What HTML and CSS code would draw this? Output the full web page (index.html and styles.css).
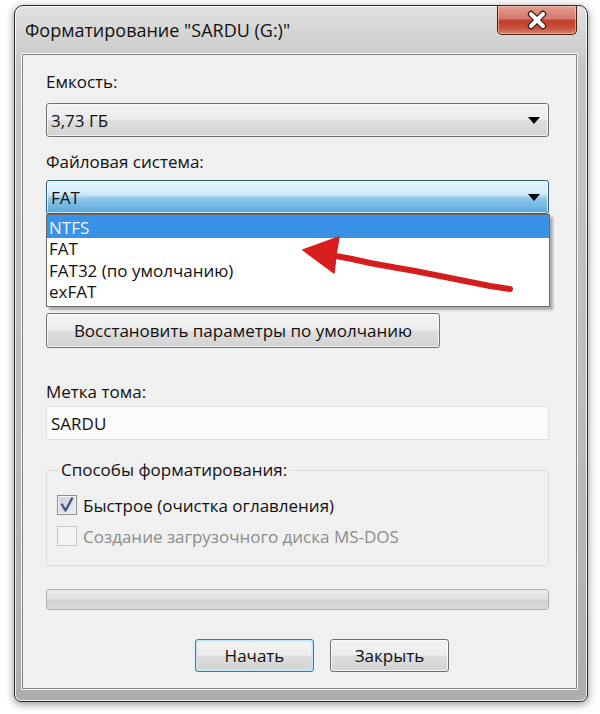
FILE: index.html
```html
<!DOCTYPE html>
<html lang="ru">
<head>
<meta charset="utf-8">
<title>Форматирование</title>
<link rel="stylesheet" href="styles.css">
</head>
<body>
<div class="window">
  <div class="titlebar">
    <span class="title">Форматирование "SARDU (G:)"</span>
    <div class="close">
      <svg width="26" height="20" viewBox="0 0 26 20">
        <path d="M7 4 L19 16 M19 4 L7 16" stroke="#3a1a14" stroke-width="6.5" stroke-linecap="round"/>
        <path d="M7 4 L19 16 M19 4 L7 16" stroke="#ffffff" stroke-width="4" stroke-linecap="round"/>
      </svg>
    </div>
  </div>
  <div class="panel">
    <div class="label">Емкость:</div>
    <div class="combo"><span>3,73 ГБ</span><span class="caret"></span></div>
    <div class="label label-fs">Файловая система:</div>
    <div class="combo-wrap">
      <div class="combo combo-hot"><span>FAT</span><span class="caret"></span></div>
      <ul class="dropdown">
        <li class="selected">NTFS</li>
        <li>FAT</li>
        <li>FAT32 (по умолчанию)</li>
        <li>exFAT</li>
      </ul>
    </div>
    <div class="btn restore">Восстановить параметры по умолчанию</div>
    <div class="label label-vol">Метка тома:</div>
    <div class="textbox">SARDU</div>
    <fieldset class="group">
      <legend>Способы форматирования:</legend>
      <div class="check">
        <span class="box box-checked">
          <svg width="18" height="18" viewBox="0 0 18 18">
            <path d="M4 8.5 L7.5 14.5 L14 2.5" fill="none" stroke="#46567a" stroke-width="2.4" stroke-linejoin="round" stroke-linecap="round"/>
          </svg>
        </span>
        <span>Быстрое (очистка оглавления)</span>
      </div>
      <div class="check check-disabled">
        <span class="box"></span>
        <span>Создание загрузочного диска MS-DOS</span>
      </div>
    </fieldset>
    <div class="progress"></div>
    <div class="buttons">
      <div class="btn btn-default">Начать</div>
      <div class="btn">Закрыть</div>
    </div>
  </div>
  <svg class="red-arrow" width="574" height="697" viewBox="14 5 574 697">
    <path d="M336 256 L352 259 L370 263 L392 267 L415 271 L440 276 L465 281 L490 286 L510 289" fill="none" stroke="#d61d1d" stroke-width="6" stroke-linecap="round" stroke-linejoin="round"/>
    <path d="M303 250 L339 237 L336 255 L334 273 Z" fill="#d91e1e" stroke="#d91e1e" stroke-width="1.5" stroke-linejoin="round"/>
  </svg>
</div>
</body>
</html>
```

FILE: styles.css
```css
html, body {
  margin: 0;
  padding: 0;
  background: #ffffff;
}

body {
  font-family: "Open Sans", "Noto Sans", "DejaVu Sans", sans-serif;
  font-size: 17px;
  color: #111;
  width: 600px;
  height: 714px;
  overflow: hidden;
}

.window {
  position: relative;
  margin: 5px 0 0 14px;
  width: 574px;
  height: 697px;
  box-sizing: border-box;
  border: 1px solid #2a2a2a;
  border-radius: 9px 9px 7px 7px;
  padding: 0 10px 12px 7px;
  display: flex;
  flex-direction: column;
  background: linear-gradient(to bottom, #e2e2e2 0px, #d4d4d4 30px, #c6c6c6 60px, #bcbcbc 400px, #adadad 100%);
  box-shadow: inset 0 0 0 1px rgba(255,255,255,0.8), 0 2px 9px rgba(0,0,0,0.45);
}

.titlebar {
  height: 48px;
  display: flex;
  justify-content: space-between;
  align-items: flex-start;
  flex: none;
}

.title {
  padding: 12px 0 0 3px;
  font-size: 18px;
  line-height: 24px;
  color: #111;
}

.close {
  width: 80px;
  height: 29px;
  box-sizing: border-box;
  border: 1px solid #4a1f18;
  border-top: none;
  border-radius: 0 0 5px 5px;
  background: linear-gradient(to bottom, #e3a093 0%, #d6786a 45%, #c0412c 52%, #c5503a 78%, #d98670 100%);
  box-shadow: inset 0 0 0 1px rgba(255,220,210,0.5);
  display: flex;
  align-items: center;
  justify-content: center;
}

.panel {
  flex: 1;
  background: #f0f0f0;
  border: 1px solid #858585;
  box-shadow: 0 0 0 1px rgba(255,255,255,0.85);
  padding: 17px 27px 0 23px;
  display: flex;
  flex-direction: column;
}

.label {
  line-height: 20px;
  height: 20px;
  margin-bottom: 11px;
}

.label-fs {
  margin-top: 15px;
  margin-bottom: 8px;
}

.label-vol {
  margin-top: 34px;
  margin-bottom: 4px;
}

.combo {
  height: 34px;
  box-sizing: border-box;
  border: 1px solid #707070;
  border-radius: 3px;
  background: linear-gradient(to bottom, #f4f4f4 0%, #ececec 48%, #dedede 52%, #d3d3d3 100%);
  box-shadow: inset 0 0 0 1px rgba(255,255,255,0.7);
  display: flex;
  align-items: center;
  justify-content: space-between;
  padding: 0 8px 0 4px;
}

.caret {
  width: 0;
  height: 0;
  border-left: 6px solid transparent;
  border-right: 6px solid transparent;
  border-top: 7px solid #000;
}

.combo-wrap {
  position: relative;
  margin-bottom: 99px;
}

.combo-hot {
  border-color: #2d5f86;
  background: linear-gradient(to bottom, #e8f5fc 0%, #cfe9f8 42%, #8ec8eb 55%, #5aa6da 100%);
}

.dropdown {
  position: absolute;
  left: 0;
  top: 100%;
  width: 504px;
  margin: 0;
  padding: 0 0 3px 0;
  list-style: none;
  background: #ffffff;
  border: 1px solid #6a6a6a;
  box-sizing: border-box;
  box-shadow: 3px 3px 2px rgba(0,0,0,0.28);
}

.dropdown li {
  height: 21.5px;
  line-height: 21px;
  padding-left: 2px;
}

.dropdown li.selected {
  background: #3a92e6;
  color: #eaf3ff;
  height: 23px;
  line-height: 25px;
}

.btn {
  box-sizing: border-box;
  border: 1px solid #707070;
  border-radius: 3px;
  background: linear-gradient(to bottom, #f4f4f4 0%, #ececec 48%, #dedede 52%, #d2d2d2 100%);
  box-shadow: inset 0 0 0 1px rgba(255,255,255,0.75);
  display: flex;
  align-items: center;
  justify-content: center;
}

.restore {
  width: 394px;
  height: 35px;
}

.textbox {
  height: 34px;
  box-sizing: border-box;
  border: 1px solid #e0e0e0;
  background: #fbfbfb;
  display: flex;
  align-items: center;
  padding-left: 4px;
}

.group {
  margin: 20px 0 0 0;
  padding: 15px 10px 17px 10px;
  border: 1px solid #d6dde2;
  border-radius: 3px;
  height: 106px;
  box-sizing: border-box;
}

.group legend {
  padding: 0 3px;
  margin-left: 1px;
  line-height: 20px;
}

.check {
  display: flex;
  align-items: center;
  height: 20px;
  gap: 6px;
  margin-bottom: 11px;
}

.box {
  width: 20px;
  height: 20px;
  box-sizing: border-box;
  border: 1px solid #8e8f8f;
  background: linear-gradient(135deg, #dcdcdc 0%, #f6f6f6 100%);
  box-shadow: inset 0 0 0 1px #f4f4f4;
  display: flex;
  align-items: center;
  justify-content: center;
}

.box-checked {
  background: linear-gradient(135deg, #c9cfdc 0%, #eef0f4 100%);
}

.check-disabled {
  color: #8c8c8c;
}

.check-disabled .box {
  border-color: #c8c8c8;
  background: #f4f4f4;
}

.progress {
  margin-top: 23px;
  height: 21px;
  box-sizing: border-box;
  border: 1px solid #b0b0b0;
  border-radius: 3px;
  background: linear-gradient(to bottom, #ececec 0%, #e2e2e2 45%, #d2d2d2 55%, #dadada 100%);
}

.buttons {
  margin-top: 29px;
  display: flex;
  gap: 16px;
  padding-left: 149px;
}

.buttons .btn {
  width: 119px;
  height: 33px;
}

.btn-default {
  border-color: #3a7bab;
  box-shadow: inset 0 0 0 1px #bfe7f7, inset 0 0 0 2px rgba(200,236,250,0.6);
}

.red-arrow {
  position: absolute;
  left: -1px;
  top: -1px;
  pointer-events: none;
}
```
